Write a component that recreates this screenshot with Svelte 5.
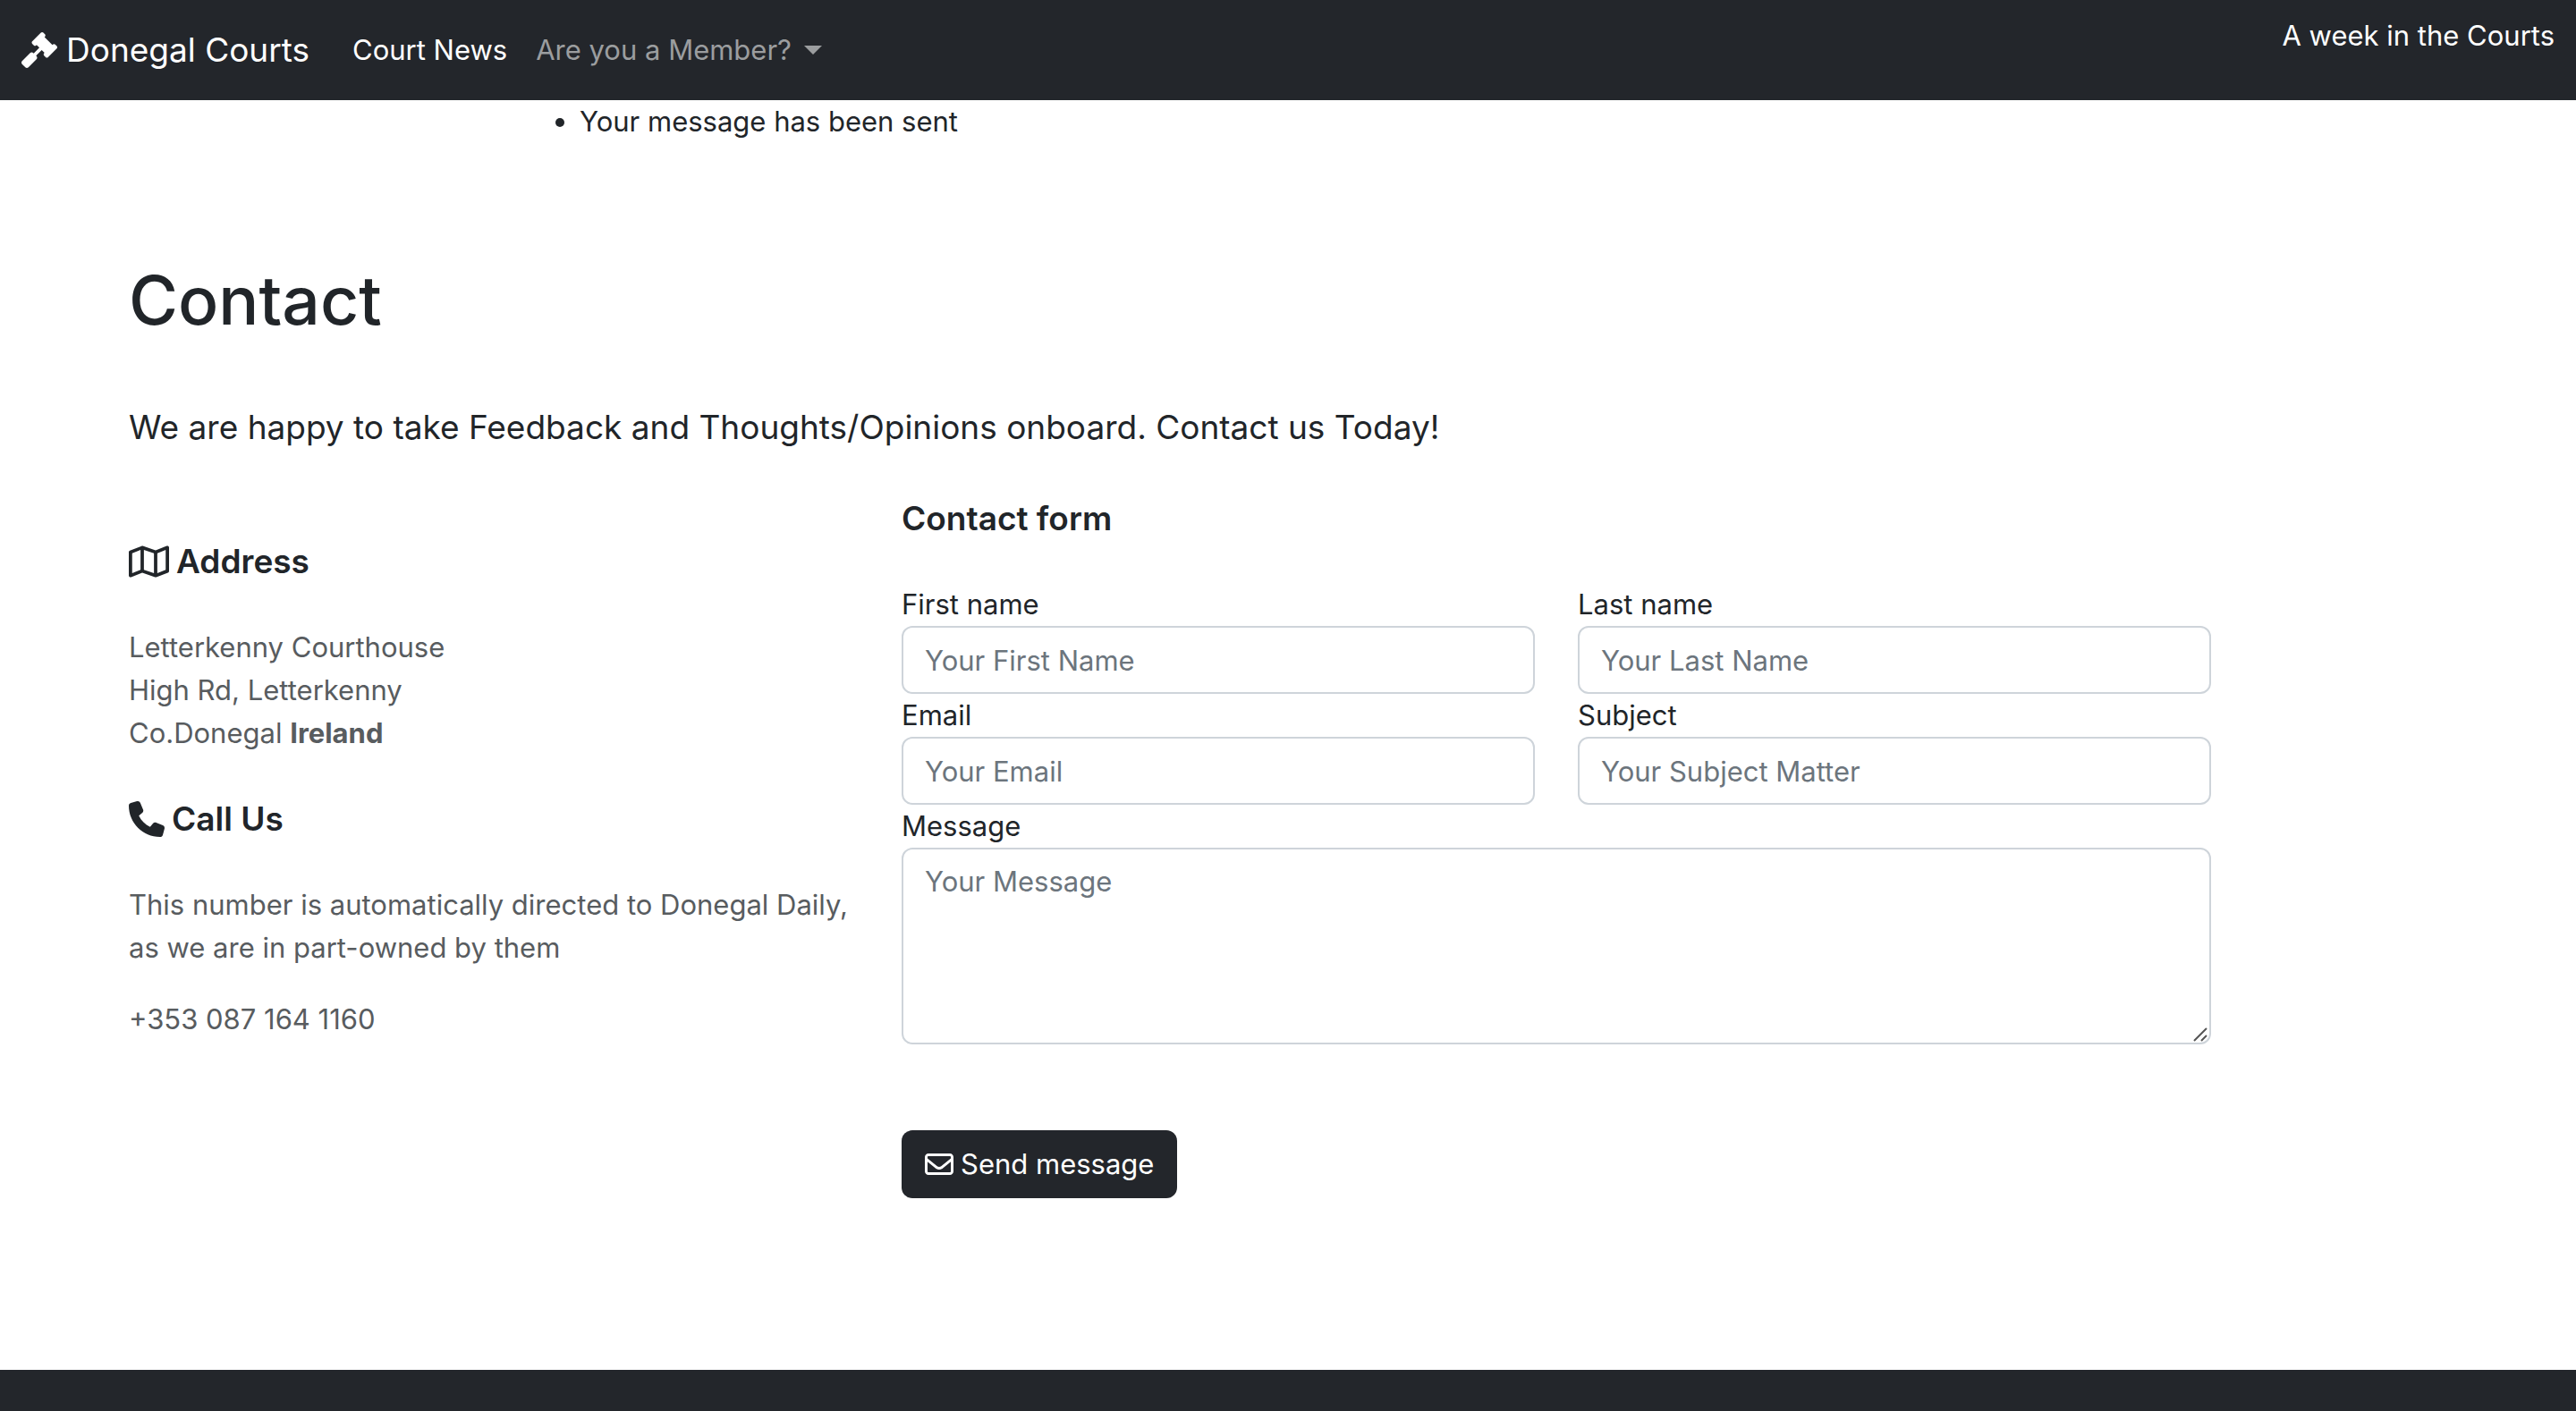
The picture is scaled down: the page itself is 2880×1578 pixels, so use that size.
<script>
  let form = $state({ first: '', last: '', email: '', subject: '', message: '' });
</script>

<header class="navbar">
  <a class="brand" href="#home">
    <svg class="icon-brand" viewBox="0 0 512 512" aria-hidden="true">
      <path d="M504.971 199.362l-22.627-22.627c-9.373-9.373-24.569-9.373-33.941 0l-5.657 5.657L329.608 69.255l5.657-5.657c9.373-9.373 9.373-24.569 0-33.941L312.638 7.029c-9.373-9.373-24.569-9.373-33.941 0L154.246 131.480c-9.373 9.373-9.373 24.569 0 33.941l22.627 22.627c9.373 9.373 24.569 9.373 33.941 0l5.657-5.657 39.598 39.598-81.040 81.040-5.657-5.657c-12.497-12.497-32.758-12.497-45.255 0L9.373 412.118c-12.497 12.497-12.497 32.758 0 45.255l45.255 45.255c12.497 12.497 32.758 12.497 45.255 0l114.745-114.745c12.497-12.497 12.497-32.758 0-45.255l-5.657-5.657 81.040-81.040 39.598 39.598-5.657 5.657c-9.373 9.373-9.373 24.569 0 33.941l22.627 22.627c9.373 9.373 24.569 9.373 33.941 0l124.451-124.451c9.372-9.372 9.372-24.568 0-33.941z" />
    </svg>
    Donegal Courts
  </a>
  <nav class="links">
    <a class="active" href="#news">Court News</a>
    <button type="button" aria-haspopup="true">Are you a Member? <span class="caret"></span></button>
  </nav>
  <span class="tagline">A week in the Courts</span>
</header>

<main>
  <ul class="messages">
    <li>Your message has been sent</li>
  </ul>

  <section class="contact">
    <h1>Contact</h1>
    <p class="lead">We are happy to take Feedback and Thoughts/Opinions onboard. Contact us Today!</p>

    <div class="columns">
      <div class="details">
        <h2>
          <svg class="icon-map" viewBox="0 0 576 512" aria-hidden="true">
            <path d="M565.6 36.200C572.100 40.700 576 48.100 576 56V392c0 10-6.200 18.900-15.500 22.400l-168 64c-5.200 2-10.900 2.100-16.100 .3L192.500 417.500l-160 61c-7.400 2.800-15.700 1.800-22.200-2.700S0 463.900 0 456V120c0-10 6.100-18.900 15.500-22.400l168-64c5.200-2 10.900-2.100 16.100-.3L383.500 94.500l160-61c7.400-2.800 15.700-1.800 22.200 2.700zM48 136.500V421.200l120-45.700V90.800L48 136.500zM360 422.700V137.300l-144-48V374.700l144 48zm48-1.500l120-45.700V90.800L408 136.500V421.200z" />
          </svg>
          Address
        </h2>
        <address>
          Letterkenny Courthouse<br />
          High Rd, Letterkenny<br />
          Co.Donegal <strong>Ireland</strong>
        </address>
        <h2>
          <svg class="icon-phone" viewBox="0 0 512 512" aria-hidden="true">
            <path d="M164.900 24.600c-7.700-18.600-28-28.500-47.400-23.200l-88 24C12.100 30.200 0 46 0 64C0 311.400 200.600 512 448 512c18 0 33.800-12.100 38.600-29.500l24-88c5.300-19.400-4.600-39.700-23.200-47.400l-96-40c-16.300-6.800-35.200-2.100-46.300 11.600L304.700 368C234.300 334.700 177.300 277.700 144 207.300L193.300 167c13.700-11.200 18.400-30 11.600-46.300l-40-96z" />
          </svg>
          Call Us
        </h2>
        <p>This number is automatically directed to Donegal Daily, as we are in part-owned by them</p>
        <p>+353 087 164 1160</p>
      </div>

      <form class="form" onsubmit={(e) => e.preventDefault()}>
        <h2>Contact form</h2>
        <div class="fields">
          <div>
            <label for="first">First name</label>
            <input id="first" type="text" placeholder="Your First Name" bind:value={form.first} />
          </div>
          <div>
            <label for="last">Last name</label>
            <input id="last" type="text" placeholder="Your Last Name" bind:value={form.last} />
          </div>
          <div>
            <label for="email">Email</label>
            <input id="email" type="email" placeholder="Your Email" bind:value={form.email} />
          </div>
          <div>
            <label for="subject">Subject</label>
            <input id="subject" type="text" placeholder="Your Subject Matter" bind:value={form.subject} />
          </div>
          <div class="wide">
            <label for="message">Message</label>
            <div class="area">
              <textarea id="message" rows="4" placeholder="Your Message" bind:value={form.message}></textarea>
              <svg class="grip" viewBox="0 0 16 16" aria-hidden="true">
                <path d="M1 15L15 1M9 15L15 9" />
              </svg>
            </div>
          </div>
        </div>
        <button class="send" type="submit">
          <svg class="icon-mail" viewBox="0 0 512 512" aria-hidden="true">
            <path d="M64 112c-8.800 0-16 7.200-16 16v22.100L220.500 291.700c20.700 17 50.400 17 71.100 0L464 150.100V128c0-8.800-7.200-16-16-16H64zM48 212.200V384c0 8.800 7.200 16 16 16H448c8.800 0 16-7.200 16-16V212.200L322 328.800c-38.400 31.500-93.700 31.500-132 0L48 212.200zM0 128C0 92.700 28.700 64 64 64H448c35.300 0 64 28.700 64 64V384c0 35.300-28.700 64-64 64H64c-35.300 0-64-28.700-64-64V128z" />
          </svg>
          Send message
        </button>
      </form>
    </div>
  </section>
</main>

<footer></footer>

<style>
  :global(body) {
    background: #fff;
  }
  :global(#app) {
    display: flex;
    flex-direction: column;
    height: 100vh;
    overflow: hidden;
    color: #212529;
    font-family: Inter, 'Liberation Sans', sans-serif;
    font-size: 31px;
    line-height: 48px;
  }
  svg {
    display: block;
    flex: none;
    fill: currentColor;
  }
  input,
  textarea,
  button {
    box-sizing: border-box;
    font: inherit;
  }
  h1,
  h2,
  p,
  ul {
    margin: 0;
  }

  .navbar {
    display: flex;
    align-items: center;
    padding: 16px 24px;
    background: #23262b;
    color: #fff;
  }
  .brand {
    display: flex;
    align-items: center;
    gap: 10px;
    padding: 10px 0;
    margin-right: 48px;
    color: #fff;
    font-size: 37px;
    line-height: 60px;
    text-decoration: none;
  }
  .icon-brand,
  .icon-phone {
    width: 40px;
    height: 40px;
  }
  .links {
    display: flex;
    gap: 32px;
  }
  .links a {
    color: #fff;
    text-decoration: none;
  }
  .links button {
    display: flex;
    align-items: center;
    gap: 14px;
    padding: 0;
    border: 0;
    background: none;
    color: #9b9d9f;
  }
  .caret {
    border-top: 10px solid;
    border-left: 10px solid transparent;
    border-right: 10px solid transparent;
  }
  .tagline {
    align-self: flex-start;
    margin-left: auto;
  }

  .messages {
    padding-left: 648px;
  }
  .contact {
    padding: 128px 168px 192px 120px;
  }
  h1,
  .lead {
    padding-left: 24px;
  }
  h1 {
    margin-bottom: 64px;
    font-size: 75px;
    font-weight: 500;
    line-height: 96px;
  }
  .lead {
    margin-bottom: 48px;
    font-size: 37px;
    line-height: 60px;
  }
  h2 {
    display: flex;
    align-items: center;
    gap: 8px;
    margin-bottom: 48px;
    font-size: 37px;
    font-weight: 600;
    line-height: 48px;
  }
  .columns {
    display: grid;
    grid-template-columns: 4fr 7fr 1fr;
  }
  .details {
    padding: 48px 24px 0;
  }
  .details p,
  address {
    color: #585c5f;
    font-style: normal;
  }
  address {
    margin-bottom: 48px;
  }
  .details p {
    margin-bottom: 32px;
  }
  .icon-map {
    width: 45px;
    height: 40px;
  }

  .form {
    padding: 0 24px;
  }
  .fields {
    display: grid;
    grid-template-columns: 1fr 1fr;
    column-gap: 48px;
    margin-bottom: 96px;
  }
  .wide {
    grid-column: 1 / -1;
  }
  label {
    display: block;
  }
  input,
  textarea {
    display: block;
    width: 100%;
    margin: 0;
    padding: 12px 24px;
    border: 2px solid #ced4da;
    border-radius: 12px;
    background: #fff;
    color: #212529;
  }
  input {
    height: 76px;
  }
  textarea {
    resize: none;
  }
  ::placeholder {
    color: #6c757d;
    opacity: 1;
  }
  .area {
    position: relative;
  }
  .grip {
    position: absolute;
    right: 4px;
    bottom: 3px;
    width: 16px;
    height: 16px;
    fill: none;
    stroke: #555;
    stroke-width: 2;
  }
  .send {
    display: flex;
    align-items: center;
    gap: 8px;
    padding: 14px 26px;
    border: 0;
    border-radius: 12px;
    background: #23262b;
    color: #fff;
  }
  .icon-mail {
    width: 32px;
    height: 32px;
  }

  footer {
    flex: 1;
    background: #23262b;
  }
</style>
